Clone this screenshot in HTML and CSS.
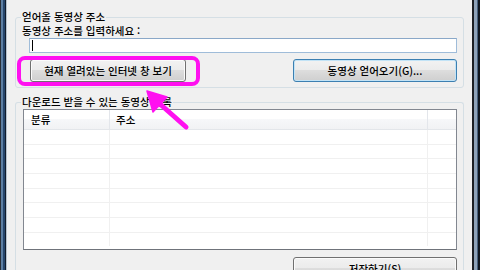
FILE: index.html
```html
<!DOCTYPE html>
<html lang="ko">
<head>
<meta charset="utf-8">
<link rel="stylesheet" href="styles.css">
</head>
<body>
<div class="window">
  <div class="frame-l"></div>
  <div class="main">
    <fieldset class="group g1">
      <legend>얻어올 동영상 주소</legend>
      <div class="label">동영상 주소를 입력하세요 :</div>
      <div class="textbox"><span class="caret"></span></div>
      <div class="btn-row">
        <div class="hl-wrap">
          <button class="btn btn-open">현재 열려있는 인터넷 창 보기</button>
          <span class="highlight"></span>
        </div>
        <button class="btn btn-default btn-get">동영상 얻어오기(G)...</button>
      </div>
    </fieldset>
    <fieldset class="group g2">
      <legend>다운로드 받을 수 있는 동영상 목록</legend>
      <div class="listview">
        <div class="lv-row lv-head">
          <div class="c1">분류</div>
          <div class="c2">주소</div>
          <div class="c3"></div>
        </div>
        <div class="lv-row"><div class="c1"></div><div class="c2"></div><div class="c3"></div></div>
        <div class="lv-row"><div class="c1"></div><div class="c2"></div><div class="c3"></div></div>
        <div class="lv-row"><div class="c1"></div><div class="c2"></div><div class="c3"></div></div>
        <div class="lv-row"><div class="c1"></div><div class="c2"></div><div class="c3"></div></div>
        <div class="lv-row"><div class="c1"></div><div class="c2"></div><div class="c3"></div></div>
        <div class="lv-row"><div class="c1"></div><div class="c2"></div><div class="c3"></div></div>
        <div class="lv-row"><div class="c1"></div><div class="c2"></div><div class="c3"></div></div>
        <div class="lv-row last"><div class="c1"></div><div class="c2"></div><div class="c3"></div></div>
      </div>
      <button class="btn btn-save">저장하기(S)</button>
    </fieldset>
  </div>
  <div class="frame-r"></div>
</div>
<svg class="arrow" width="60" height="50" viewBox="0 0 60 50">
  <line x1="20" y1="20" x2="46" y2="43" stroke="#ff10f0" stroke-width="5" stroke-linecap="round"/>
  <polygon points="7,7 27,13 13,28" fill="#ff10f0" stroke="#ff10f0" stroke-width="1.5" stroke-linejoin="round"/>
</svg>
</body>
</html>
```
FILE: styles.css
```css
html, body {
  margin: 0;
  padding: 0;
}
body {
  width: 480px;
  height: 270px;
  overflow: hidden;
  position: relative;
  background: #f0f0f0;
  font-family: "Noto Sans CJK KR", "Noto Sans", sans-serif;
  font-size: 10.5px;
  font-weight: 500;
  color: #000;
}
.window {
  display: flex;
  height: 270px;
}
.frame-l {
  width: 7px;
  flex: none;
  background: linear-gradient(to right, #2a2f36 0 1px, #5d7fa3 1px 3px, #27466c 3px 5px, #111c2b 5px 6px, #b7c3cf 6px 7px);
}
.frame-r {
  width: 8px;
  flex: none;
  background: linear-gradient(to right, #1c1f24 0 2px, #8ea2b8 2px 5px, #46607e 5px 6px, #10161f 6px 8px);
}
.main {
  flex: 1;
  padding: 0 8px;
  display: flex;
  flex-direction: column;
  min-width: 0;
}
.group {
  margin: 0;
  border: 1px solid #d5dfe5;
  border-radius: 3px;
  padding: 0 6px 5px 6px;
  min-width: 0;
}
.group legend {
  padding: 0 1px;
  margin-left: -1px;
  line-height: 12px;
  white-space: nowrap;
}
.g1 {
  margin-top: 11px;
}
.label {
  margin-top: 1px;
  line-height: 13px;
  white-space: nowrap;
}
.textbox {
  margin: 1px 0 0 7px;
  height: 15px;
  box-sizing: border-box;
  border: 1px solid #9fbcd9;
  border-top-color: #8aa8c8;
  background: #fff;
  padding: 1px 0 0 2px;
}
.caret {
  display: block;
  width: 1px;
  height: 11px;
  background: #000;
}
.btn-row {
  margin-top: 6px;
  display: flex;
  justify-content: space-between;
  align-items: flex-start;
}
.hl-wrap {
  position: relative;
  margin-left: 8px;
}
.btn {
  display: block;
  height: 23px;
  box-sizing: border-box;
  border: 1px solid #707070;
  border-radius: 3px;
  background: linear-gradient(#f2f2f2 0%, #ebebeb 50%, #dddddd 50%, #cfcfcf 100%);
  box-shadow: inset 0 0 0 1px #fbfbfb;
  font-family: inherit;
  font-size: 10.5px;
  font-weight: 500;
  color: #000;
  padding: 0;
  line-height: 20px;
  white-space: nowrap;
}
.btn-open {
  width: 156px;
}
.btn-get {
  width: 164px;
}
.btn-default {
  border-color: #3c7fb1;
  box-shadow: inset 0 0 0 1px #c2e3f6;
}
.highlight {
  position: absolute;
  left: -13px;
  top: -3px;
  right: -14px;
  bottom: -4px;
  border: 4px solid #ff10f0;
  border-radius: 8px;
}
.g2 {
  margin-top: 8px;
  flex: 1;
  display: flex;
  flex-direction: column;
  border-bottom: none;
}
.listview {
  margin: 1px 0 0 1px;
  height: 141px;
  box-sizing: border-box;
  border: 1px solid #828790;
  border-bottom-color: #6f737a;
  background: #fff;
  overflow: hidden;
}
.lv-row {
  display: flex;
  height: 13.67px;
  border-bottom: 1px solid #f0f0f0;
}
.lv-row.last {
  border-bottom: none;
}
.lv-row .c1 {
  width: 86px;
  border-right: 1px solid #f0f0f0;
  box-sizing: border-box;
  padding-left: 7px;
}
.lv-row .c2 {
  width: 318px;
  border-right: 1px solid #f0f0f0;
  box-sizing: border-box;
  padding-left: 6px;
}
.lv-row .c3 {
  flex: 1;
}
.lv-head {
  height: 19px;
  border-bottom: 1px solid #e3e6ea;
  background: linear-gradient(#ffffff 0%, #ffffff 45%, #f7f8fa 45%, #f1f2f4 100%);
  line-height: 19px;
  white-space: nowrap;
}
.lv-head .c1,
.lv-head .c2 {
  border-right-color: #e3e6eb;
}
.btn-save {
  margin-top: 7px;
  align-self: flex-end;
  width: 164px;
  flex: none;
}
.arrow {
  position: absolute;
  left: 140px;
  top: 84px;
}
```
